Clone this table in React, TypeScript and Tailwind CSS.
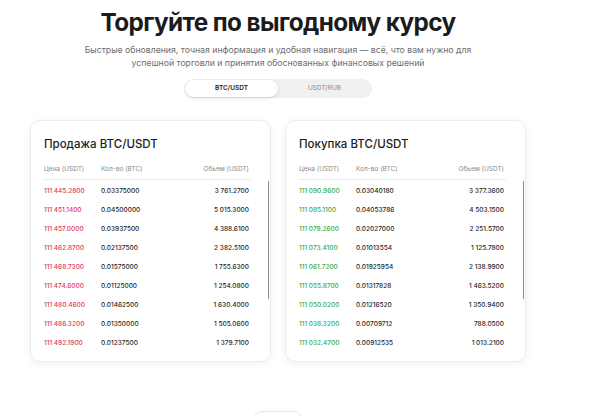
import React from 'react';

type Row = [string, string, string];

const sellRows: Row[] = [
  ['111 445.2800', '0.03375000', '3 761.2700'],
  ['111 451.1400', '0.04500000', '5 015.3000'],
  ['111 457.0000', '0.03937500', '4 388.6100'],
  ['111 462.8700', '0.02137500', '2 382.5100'],
  ['111 468.7300', '0.01575000', '1 755.6300'],
  ['111 474.6000', '0.01125000', '1 254.0800'],
  ['111 480.4600', '0.01462500', '1 630.4000'],
  ['111 486.3200', '0.01350000', '1 505.0600'],
  ['111 492.1900', '0.01237500', '1 379.7100'],
];

const buyRows: Row[] = [
  ['111 090.9600', '0.03040180', '3 377.3600'],
  ['111 085.1100', '0.04053786', '4 503.1500'],
  ['111 079.2600', '0.02027000', '2 251.5700'],
  ['111 073.4100', '0.01013554', '1 125.7800'],
  ['111 061.7200', '0.01925954', '2 138.9900'],
  ['111 055.8700', '0.01317828', '1 463.5200'],
  ['111 050.0200', '0.01216520', '1 350.9400'],
  ['111 038.3200', '0.00709712', '788.0500'],
  ['111 032.4700', '0.00912535', '1 013.2100'],
];

const OrderCard: React.FC<{ title: string; rows: Row[]; priceClass: string }> = ({ title, rows, priceClass }) => (
  <div className="relative w-[241px] h-[242px] rounded-[10px] border border-[#ececec] bg-white shadow-[0_2px_8px_rgba(0,0,0,0.06)] pl-[13px] pr-[19px] pt-[15px]">
    <h3 className="text-[11.5px] leading-[16px] font-medium text-[#1c1c1c]">{title}</h3>
    <div className="mt-[13px] flex text-[6.5px] leading-[8px] text-[#8a8a8a] pb-[6px] border-b border-[#ececec]">
      <span className="w-[57px]">Цена (USDT)</span>
      <span>Кол-во (BTC)</span>
      <span className="ml-auto pr-[2px]">Обьем (USDT)</span>
    </div>
    <div className="pt-[2px]">
      {rows.map((r) => (
        <div key={r[0]} className="flex h-[19px] items-center text-[6.5px] font-medium">
          <span className={`w-[57px] ${priceClass}`}>{r[0]}</span>
          <span className="text-[#1f1f1f]">{r[1]}</span>
          <span className="ml-auto pr-[2px] text-[#1f1f1f]">{r[2]}</span>
        </div>
      ))}
    </div>
    <div className="absolute left-[237px] top-[60px] w-px h-[118px] bg-[#8c8c8c]" />
  </div>
);

export default function App() {
  return (
    <div className="w-[592px] h-[416px] overflow-hidden bg-white font-['Inter',sans-serif]">
      <div className="w-[556px] flex flex-col items-center">
        <h1 className="mt-[5px] text-[24.3px] leading-[34px] font-bold text-[#1b1b1b] tracking-[-0.6px]">
          Торгуйте по выгодному курсу
        </h1>
        <p className="mt-[5px] text-center text-[8.7px] leading-[13px] text-[#6e6e6e]">
          Быстрые обновления, точная информация и удобная навигация — всё, что вам нужно для
          <br />
          успешной торговли и принятия обоснованных финансовых решений
        </p>
        <div className="mt-[9px] flex w-[188px] h-[19px] rounded-full bg-[#f0f0f0] p-px">
          <div className="w-[93px] rounded-full bg-white shadow-[0_1px_3px_rgba(0,0,0,0.15)] flex items-center justify-center text-[6.5px] font-semibold text-[#1b1b1b]">
            BTC/USDT
          </div>
          <div className="flex-1 flex items-center justify-center text-[6.5px] text-[#8a8a8a]">USDT/RUB</div>
        </div>
        <div className="mt-[22px] flex gap-[14px]">
          <OrderCard title="Продажа BTC/USDT" rows={sellRows} priceClass="text-[#dc3a5c]" />
          <OrderCard title="Покупка BTC/USDT" rows={buyRows} priceClass="text-[#3caa48]" />
        </div>
        <div className="mt-[49px] w-[48px] h-[20px] rounded-t-[8px] border border-[#e6e6e6]" />
      </div>
    </div>
  );
}
